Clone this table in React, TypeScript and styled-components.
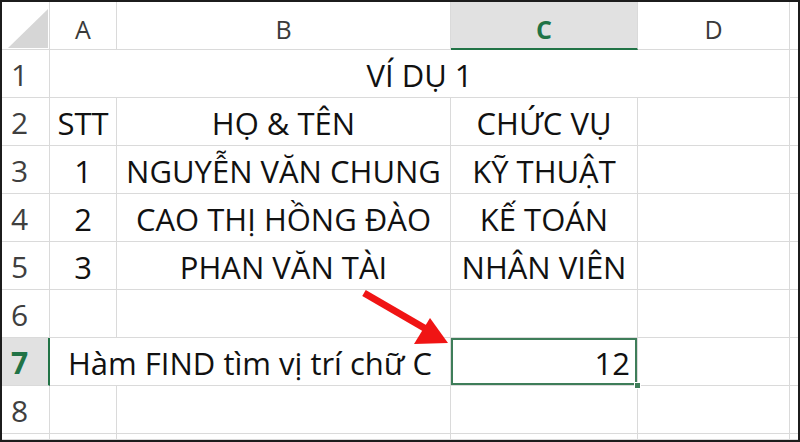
import React from "react";
import styled, { createGlobalStyle, css } from "styled-components";

const Global = createGlobalStyle`
  html, body { margin: 0; padding: 0; background: #ffffff; }
  #root { width: 800px; height: 442px; }
`;

const FONT = `"Open Sans", "Noto Sans", "DejaVu Sans", sans-serif`;
const GRID = "#dadada";
const GREEN = "#217346";

const Frame = styled.div`
  position: relative;
  width: 800px;
  height: 442px;
  box-sizing: border-box;
  border: 2px solid #1c1c1c;
  overflow: hidden;
  background: #fff;
`;

const Sheet = styled.div`
  display: grid;
  grid-template-columns: 48px 67px 334px 187px 152px 1fr;
  grid-template-rows: 48px repeat(8, 48px) 1fr;
  width: 100%;
  height: 100%;
  font-family: ${FONT};
`;

const Base = css`
  box-sizing: border-box;
  border-right: 1px solid ${GRID};
  border-bottom: 1px solid ${GRID};
  display: flex;
  align-items: flex-end;
  white-space: nowrap;
  overflow: visible;
  position: relative;
`;

const Corner = styled.div`
  ${Base};
  &::after {
    content: "";
    position: absolute;
    left: 6px;
    top: 7px;
    width: 40px;
    height: 39px;
    background: #d6d6d6;
    clip-path: polygon(100% 0, 100% 100%, 0 100%);
  }
`;

const ColHeader = styled.div<{ $selected?: boolean }>`
  ${Base};
  justify-content: center;
  padding-bottom: 3px;
  font-size: 25px;
  color: #3a3a3a;
  background: ${(p) => (p.$selected ? "#e1e1e1" : "#fff")};
  ${(p) =>
    p.$selected &&
    css`
      border-bottom: 2px solid ${GREEN};
      padding-bottom: 2px;
      color: ${GREEN};
      font-weight: 700;
    `}
`;

const RowHeader = styled.div<{ $selected?: boolean }>`
  ${Base};
  justify-content: flex-start;
  padding-left: 9px;
  padding-bottom: 2px;
  font-size: 30px;
  color: #3f3f3f;
  background: ${(p) => (p.$selected ? "#e1e1e1" : "#fff")};
  ${(p) =>
    p.$selected &&
    css`
      border-right: 2px solid ${GREEN};
      color: ${GREEN};
      font-weight: 700;
    `}
`;

const Cell = styled.div<{ $align?: "left" | "center" | "right"; $span?: number; $selected?: boolean }>`
  ${Base};
  grid-column: span ${(p) => p.$span ?? 1};
  justify-content: ${(p) =>
    p.$align === "center" ? "center" : p.$align === "right" ? "flex-end" : "flex-start"};
  padding: 0 7px 1px 7px;
  font-size: 31px;
  color: #111;
  ${(p) =>
    p.$selected &&
    css`
      box-shadow: inset 0 0 0 2px #3e7d59;
      &::after {
        content: "";
        position: absolute;
        right: -4px;
        bottom: -4px;
        width: 5px;
        height: 5px;
        background: #3e7d59;
        border: 1px solid #fff;
        z-index: 2;
      }
    `}
`;

const Arrow = styled.svg`
  position: absolute;
  left: 0;
  top: 0;
  pointer-events: none;
`;

type Row = { n: number; cells: React.ReactNode };

const cols = ["A", "B", "C", "D"];

const Empty = ({ count }: { count: number }) => (
  <>
    {Array.from({ length: count }, (_, i) => (
      <Cell key={i} />
    ))}
  </>
);

export default function App() {
  const rows: Row[] = [
    {
      n: 1,
      cells: (
        <>
          <Cell $span={4} $align="center">VÍ DỤ 1</Cell>
          <Empty count={1} />
        </>
      ),
    },
    {
      n: 2,
      cells: (
        <>
          <Cell $align="center">STT</Cell>
          <Cell $align="center">HỌ &amp; TÊN</Cell>
          <Cell $align="center">CHỨC VỤ</Cell>
          <Empty count={2} />
        </>
      ),
    },
    {
      n: 3,
      cells: (
        <>
          <Cell $align="center">1</Cell>
          <Cell $align="center">NGUYỄN VĂN CHUNG</Cell>
          <Cell $align="center">KỸ THUẬT</Cell>
          <Empty count={2} />
        </>
      ),
    },
    {
      n: 4,
      cells: (
        <>
          <Cell $align="center">2</Cell>
          <Cell $align="center">CAO THỊ HỒNG ĐÀO</Cell>
          <Cell $align="center">KẾ TOÁN</Cell>
          <Empty count={2} />
        </>
      ),
    },
    {
      n: 5,
      cells: (
        <>
          <Cell $align="center">3</Cell>
          <Cell $align="center">PHAN VĂN TÀI</Cell>
          <Cell $align="center">NHÂN VIÊN</Cell>
          <Empty count={2} />
        </>
      ),
    },
    { n: 6, cells: <Empty count={5} /> },
    {
      n: 7,
      cells: (
        <>
          <Cell $span={2} $align="center">Hàm FIND tìm vị trí chữ C</Cell>
          <Cell $align="right" $selected>12</Cell>
          <Empty count={2} />
        </>
      ),
    },
    { n: 8, cells: <Empty count={5} /> },
    { n: 9, cells: <Empty count={5} /> },
  ];

  return (
    <>
      <Global />
      <Frame>
        <Sheet>
          <Corner />
          {cols.map((c) => (
            <ColHeader key={c} $selected={c === "C"}>
              {c}
            </ColHeader>
          ))}
          <ColHeader />
          {rows.map((r) => (
            <React.Fragment key={r.n}>
              <RowHeader $selected={r.n === 7}>{r.n <= 8 ? r.n : ""}</RowHeader>
              {r.cells}
            </React.Fragment>
          ))}
        </Sheet>
        <Arrow width="800" height="442" viewBox="0 0 800 442">
          <line x1="362" y1="291" x2="424" y2="327" stroke="#f01414" strokeWidth="7" />
          <polygon points="428,316 446,341 412,342" fill="#f01414" />
        </Arrow>
      </Frame>
    </>
  );
}
